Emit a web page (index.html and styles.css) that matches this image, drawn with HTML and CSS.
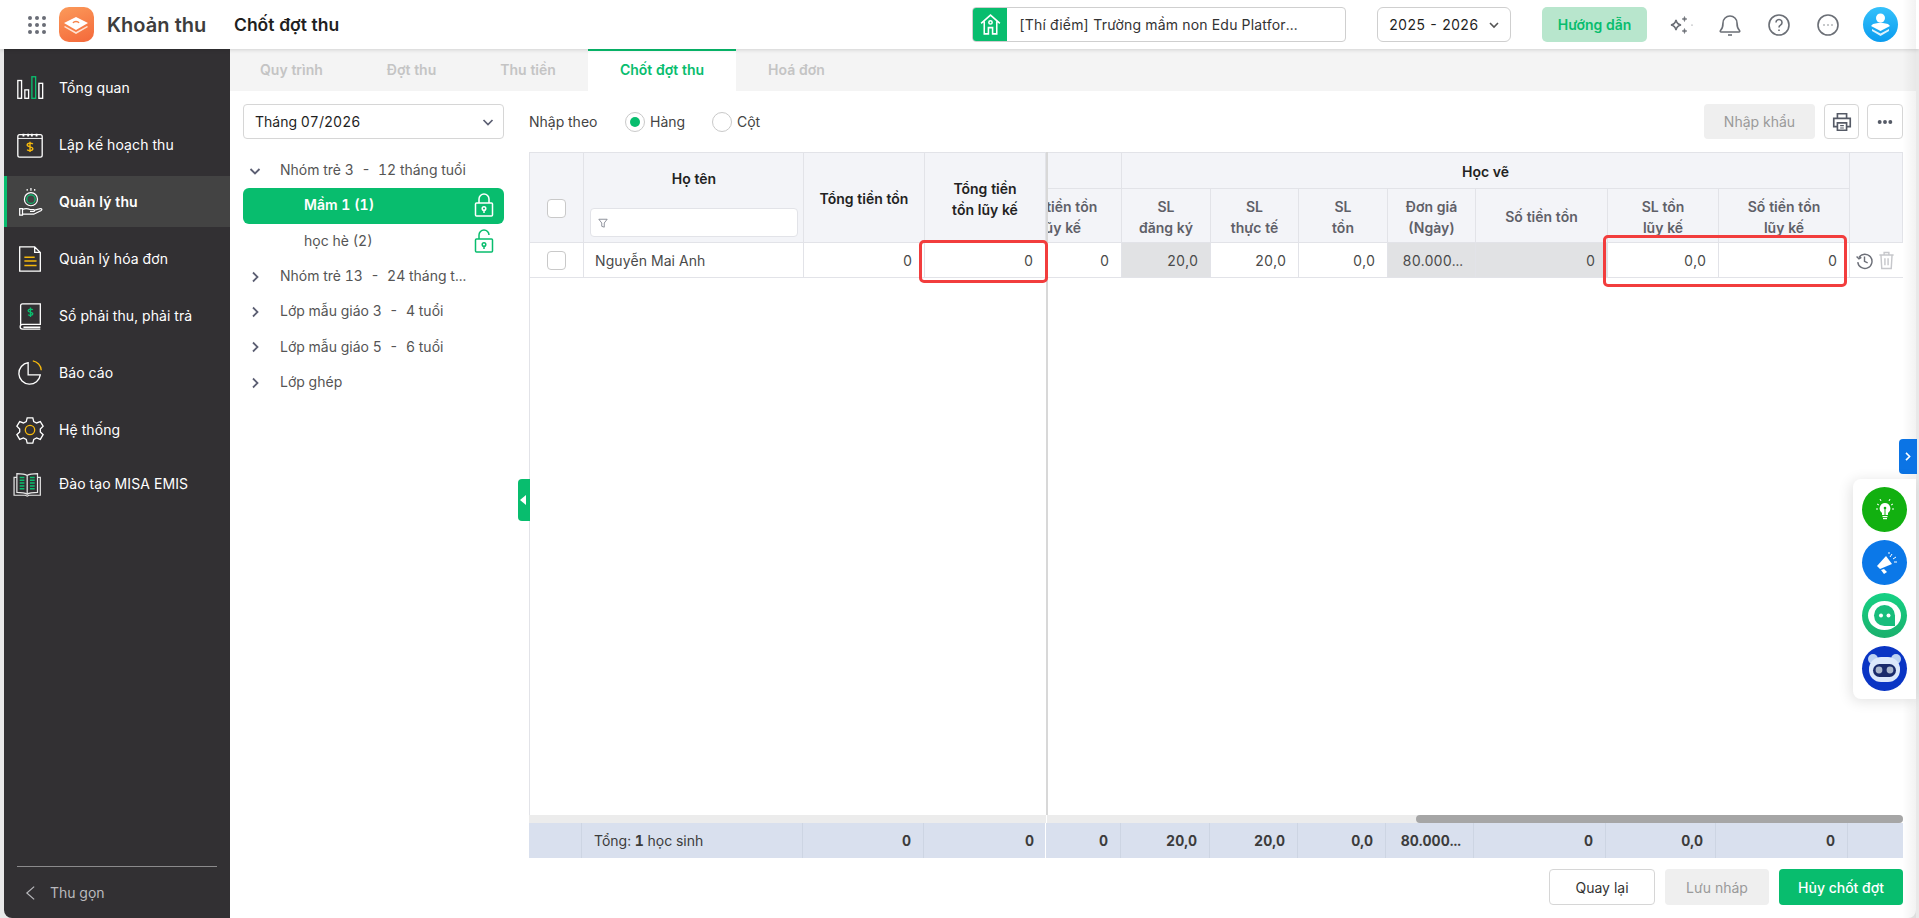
FILE: index.html
```html
<!DOCTYPE html>
<html lang="vi">
<head>
    <meta charset="UTF-8">
    <title>Khoản thu - Chốt đợt thu</title>
    <link rel="stylesheet" href="styles.css">
</head>
<body>
    <header class="topbar">
        <div class="app-dots">
            <i></i><i></i><i></i><i></i><i></i><i></i><i></i><i></i><i></i>
        </div>
        <div class="app-logo">
            <svg viewBox="0 0 34 34" width="34" height="34">
                <path d="M17 10l12 6-12 7-12-7z" fill="#fff"/>
                <path d="M6 19l11 6 11-6 1 1-12 7-12-7z" fill="#ffe3d2"/>
                <path d="M14 16c1-2 5-2 6 0" fill="none" stroke="#f7844a" stroke-width="1.4"/>
            </svg>
        </div>
        <div class="app-name">Khoản thu</div>
        <div class="page-title">Chốt đợt thu</div>
        <div class="school-box">
            <span class="school-icon">
                <svg viewBox="0 0 24 24" width="25" height="25" fill="none" stroke="#fff" stroke-width="1.5">
                    <path d="M3 11l9-8 9 8M6 9v12h4v-6h4v6h4V9"/>
                    <circle cx="12" cy="10" r="1.6"/>
                </svg>
            </span>
            <span class="school-name">[Thí điểm] Trường mầm non Edu Platfor...</span>
        </div>
        <div class="year-box">
            <span>2025 - 2026</span>
            <svg class="chev" viewBox="0 0 12 12" width="12" height="12"><path d="M2 4l4 4 4-4" fill="none" stroke="#555" stroke-width="1.6"/></svg>
        </div>
        <button class="guide-btn">Hướng dẫn</button>
        <div class="top-icons">
            <svg viewBox="0 0 24 24" width="24" height="24" fill="none" stroke="#6b6f76" stroke-width="1.6">
                <path d="M7 7c.6 3 1.900 4.400 5 5-3.100.6-4.400 2-5 5-.6-3-1.900-4.400-5-5 3.100-.6 4.400-2 5-5z"/>
                <path d="M15.500 3.500c.3 1.500.9 2.200 2.500 2.500-1.600.3-2.200 1-2.500 2.500-.3-1.500-.9-2.200-2.500-2.500 1.600-.3 2.200-1 2.500-2.500zM15.500 15.500c.3 1.500.9 2.200 2.500 2.500-1.600.3-2.200 1-2.500 2.500-.3-1.500-.9-2.200-2.500-2.500 1.600-.3 2.200-1 2.500-2.500z" fill="#6b6f76" stroke-width=".6"/>
                <circle cx="23" cy="12" r=".6" fill="#6b6f76" stroke="none"/>
            </svg>
            <svg viewBox="0 0 24 24" width="24" height="24" fill="none" stroke="#6b6f76" stroke-width="1.6">
                <path d="M5 10a7 7 0 0 1 14 0c0 4 1 6 2.500 7.500.6.7.2 1.500-.6 1.500H3.100c-.8 0-1.200-.8-.6-1.500C4 16 5 14 5 10z"/>
                <path d="M10 22h4"/>
            </svg>
            <svg viewBox="0 0 24 24" width="24" height="24" fill="none" stroke="#6b6f76" stroke-width="1.6">
                <circle cx="12" cy="12" r="10"/>
                <path d="M9 9.500a3 3 0 1 1 4.500 2.600c-1 .6-1.500 1.200-1.500 2.400M12 16.500v1.500"/>
            </svg>
            <svg viewBox="0 0 24 24" width="24" height="24" fill="none" stroke="#6b6f76" stroke-width="1.6">
                <circle cx="12" cy="12" r="10"/>
                <path d="M7.500 12h1M11.500 12h1M15.500 12h1"/>
            </svg>
        </div>
        <div class="avatar">
            <svg viewBox="0 0 35 35" width="35" height="35">
                <circle cx="17.500" cy="11" r="4.500" fill="#fff"/>
                <path d="M10 17l7.500-1.500L25 17l2 2-9.500 5L8 19z" fill="#fff"/>
                <path d="M9 22l8.500 4.500L26 22v2l-8.500 5L9 24z" fill="#fff" opacity=".85"/>
            </svg>
        </div>
    </header>

    <div class="layout">
        <aside class="sidebar">
            <nav class="menu">
                <a class="menu-item">
                    <svg class="menu-icon" viewBox="0 0 32 32" fill="none" stroke="#fff" stroke-width="1.4">
                        <rect x="3" y="8" width="4" height="19"/>
                        <rect x="10.500" y="18" width="4" height="9"/>
                        <rect x="18" y="4" width="4" height="23" stroke="#0abf6f"/>
                        <rect x="25.500" y="11" width="4" height="16"/>
                    </svg>
                    Tổng quan
                </a>
                <a class="menu-item">
                    <svg class="menu-icon" viewBox="0 0 32 32" fill="none" stroke="#fff" stroke-width="1.4">
                        <rect x="3" y="5" width="26" height="24" rx="2"/>
                        <path d="M3 9h26" stroke-width="1"/>
                        <path d="M9 4v3M14 4v3M18 4v3M23 4v3" stroke-width="2"/>
                        <path d="M19 15c-1-1.500-6-1.500-6 1s6 1.500 6 4-5 2.500-6 1M16 12.500v11" stroke="#f5b80c" stroke-width="1.500"/>
                    </svg>
                    Lập kế hoạch thu
                </a>
                <a class="menu-item active">
                    <svg class="menu-icon" viewBox="0 0 32 32" fill="none" stroke="#fff" stroke-width="1.3">
                        <circle cx="17" cy="13" r="7"/>
                        <circle cx="17" cy="13" r="4.500" stroke="#0abf6f"/>
                        <path d="M17 1v3M13 2v2M21 2v2"/>
                        <path d="M5 23h3v7H5zM8 24c4-2 6-1 8 0h4c1 0 1 2 0 2h-4M20 25l7-2c2 0 2 1 1 2l-8 4H8"/>
                    </svg>
                    Quản lý thu
                </a>
                <a class="menu-item">
                    <svg class="menu-icon" viewBox="0 0 32 32" fill="none" stroke="#fff" stroke-width="1.4">
                        <path d="M5 3h16l6 6v20H5zM21 3v6h6"/>
                        <path d="M10 14h11M10 18h13M10 23h13" stroke="#f5b80c" stroke-width="1.600"/>
                    </svg>
                    Quản lý hóa đơn
                </a>
                <a class="menu-item">
                    <svg class="menu-icon" viewBox="0 0 32 32" fill="none" stroke="#fff" stroke-width="1.4">
                        <path d="M6 25V5a2 2 0 0 1 2-2h19v22H8a2.500 2.500 0 0 0 0 5h19M9 28h18"/>
                        <path d="M19 9.500c-1-1.200-5-1.200-5 .8s5 1.200 5 3.400-4 2-5 .8M16.500 7v10" stroke="#0abf6f" stroke-width="1.500"/>
                    </svg>
                    Sổ phải thu, phải trả
                </a>
                <a class="menu-item">
                    <svg class="menu-icon" viewBox="0 0 32 32" fill="none" stroke="#fff" stroke-width="1.4">
                        <path d="M14 5a11.500 11.500 0 1 0 13 13H14z"/>
                        <path d="M19 3a11 11 0 0 1 9 10" stroke="#f5b80c"/>
                    </svg>
                    Báo cáo
                </a>
                <a class="menu-item">
                    <svg class="menu-icon" viewBox="0 0 32 32" fill="none" stroke="#fff" stroke-width="1.4">
                        <path d="M13 3h6l1 4 3 1.500 4-1.500 3 5-3 3v3l3 3-3 5-4-1.500-3 1.500-1 4h-6l-1-4-3-1.500-4 1.500-3-5 3-3v-3l-3-3 3-5 4 1.500 3-1.500z"/>
                        <circle cx="16" cy="16" r="5" stroke="#f5b80c"/>
                    </svg>
                    Hệ thống
                </a>
                <a class="menu-item last">
                    <svg class="menu-icon" viewBox="0 0 32 32" fill="none" stroke="#e6e6e6" stroke-width="1.3">
                        <g transform="translate(-3 0)">
                            <path d="M16 7c-3-2-7-2-11-2v20c4 0 8 0 11 2 3-2 7-2 11-2V5c-4 0-8 0-11 2zM16 7v20M5 9H2v19h12l2 1 2-1h12V9h-3"/>
                            <path d="M8 9h5M8 12h5M8 15h5M8 18h5M8 21h5M19 9h5M19 12h5M19 15h5M19 18h5M19 21h5" stroke="#0abf6f" stroke-width="1.600"/>
                        </g>
                    </svg>
                    Đào tạo MISA EMIS
                </a>
            </nav>
            <div class="collapse-row">
                <svg viewBox="0 0 12 16" width="11" height="16"><path d="M10 1L2 8l8 7" fill="none" stroke="#b9b9bd" stroke-width="1.300"/></svg>
                <span>Thu gọn</span>
            </div>
        </aside>

        <main class="main">
            <div class="tabs">
                <a class="tab">Quy trình</a>
                <a class="tab">Đợt thu</a>
                <a class="tab">Thu tiền</a>
                <a class="tab active">Chốt đợt thu</a>
                <a class="tab">Hoá đơn</a>
            </div>

            <div class="content">
                <section class="tree-panel">
                    <div class="month-select">
                        <span>Tháng 07/2026</span>
                        <svg viewBox="0 0 12 12" width="12" height="12"><path d="M1.500 4l4.500 4.500L10.500 4" fill="none" stroke="#5c5f73" stroke-width="1.700"/></svg>
                    </div>
                    <ul class="tree">
                        <li class="tree-row">
                            <svg class="tree-chev" viewBox="0 0 12 12"><path d="M1.500 4l4.500 4.500L10.500 4" fill="none" stroke="#5c5f73" stroke-width="1.800"/></svg>
                            Nhóm trẻ 3&nbsp; - &nbsp;12 tháng tuổi
                        </li>
                        <li class="tree-row child selected">
                            Mầm 1 (1)
                            <svg class="lock" viewBox="0 0 20 24" fill="none" stroke="#fff" stroke-width="1.500">
                                <rect x="1.500" y="10" width="17" height="13" rx="1"/>
                                <path d="M5 10V6a5 5 0 0 1 10 0v4"/>
                                <circle cx="10" cy="15.500" r="1.800"/>
                                <path d="M10 17v3"/>
                            </svg>
                        </li>
                        <li class="tree-row child">
                            học hè (2)
                            <svg class="lock" viewBox="0 0 20 24" fill="none" stroke="#08bd6e" stroke-width="1.500">
                                <rect x="1.500" y="10" width="17" height="13" rx="1"/>
                                <path d="M5 10V6a5 5 0 0 1 10 0"/>
                                <circle cx="10" cy="15.500" r="1.800"/>
                                <path d="M10 17v3"/>
                            </svg>
                        </li>
                        <li class="tree-row">
                            <svg class="tree-chev" viewBox="0 0 12 12"><path d="M4 1.500L8.500 6 4 10.500" fill="none" stroke="#5c5f73" stroke-width="1.800"/></svg>
                            Nhóm trẻ 13&nbsp; - &nbsp;24 tháng t...
                        </li>
                        <li class="tree-row">
                            <svg class="tree-chev" viewBox="0 0 12 12"><path d="M4 1.500L8.500 6 4 10.500" fill="none" stroke="#5c5f73" stroke-width="1.800"/></svg>
                            Lớp mẫu giáo 3&nbsp; - &nbsp;4 tuổi
                        </li>
                        <li class="tree-row">
                            <svg class="tree-chev" viewBox="0 0 12 12"><path d="M4 1.500L8.500 6 4 10.500" fill="none" stroke="#5c5f73" stroke-width="1.800"/></svg>
                            Lớp mẫu giáo 5&nbsp; - &nbsp;6 tuổi
                        </li>
                        <li class="tree-row">
                            <svg class="tree-chev" viewBox="0 0 12 12"><path d="M4 1.500L8.500 6 4 10.500" fill="none" stroke="#5c5f73" stroke-width="1.800"/></svg>
                            Lớp ghép
                        </li>
                    </ul>
                </section>

                <section class="table-panel">
                    <div class="toolbar">
                        <span class="input-label">Nhập theo</span>
                        <label class="radio checked"><i></i>Hàng</label>
                        <label class="radio"><i></i>Cột</label>
                        <div class="toolbar-right">
                            <button class="btn-disabled import-btn">Nhập khẩu</button>
                            <button class="square-btn">
                                <svg viewBox="0 0 24 24" width="22" height="22" fill="none" stroke="#555a66" stroke-width="1.800">
                                    <path d="M7 8V3h10v5M7 17H3V8h18v9h-4"/>
                                    <path d="M7 13h10v8H7z"/>
                                    <path d="M10 16h4M10 18.500h4" stroke-width="1.200"/>
                                </svg>
                            </button>
                            <button class="square-btn wide">
                                <svg viewBox="0 0 18 6" width="16" height="6" fill="#555a66"><circle cx="3" cy="3" r="2.200"/><circle cx="9" cy="3" r="2.200"/><circle cx="15" cy="3" r="2.200"/></svg>
                            </button>
                        </div>
                    </div>

                    <div class="data-table">
                        <div class="panes">
                            <div class="pane-frozen">
                                <div class="frozen-grid">
                                    <div class="th check-cell"><span class="checkbox"></span></div>
                                    <div class="th name-head">
                                        <span>Họ tên</span>
                                        <div class="filter-box">
                                            <svg viewBox="0 0 12 12" width="10" height="10"><path d="M1 1.500h10L7.500 6v5l-3-1V6z" fill="none" stroke="#7b7e8a"/></svg>
                                        </div>
                                    </div>
                                    <div class="th strong">Tổng tiền tồn</div>
                                    <div class="th strong">Tổng tiền<br>tồn lũy kế</div>

                                    <div class="td check-cell"><span class="checkbox"></span></div>
                                    <div class="td left">Nguyễn Mai Anh</div>
                                    <div class="td">0</div>
                                    <div class="td">0</div>
                                </div>
                            </div>
                            <div class="pane-scroll">
                                <div class="scroll-grid">
                                    <div class="th group blank"></div>
                                    <div class="th group">Học vẽ</div>
                                    <div class="th tail"></div>

                                    <div class="th sub">Số tiền tồn<br>lũy kế</div>
                                    <div class="th sub">SL<br>đăng ký</div>
                                    <div class="th sub">SL<br>thực tế</div>
                                    <div class="th sub">SL<br>tồn</div>
                                    <div class="th sub">Đơn giá<br>(Ngày)</div>
                                    <div class="th sub">Số tiền tồn</div>
                                    <div class="th sub">SL tồn<br>lũy kế</div>
                                    <div class="th sub">Số tiền tồn<br>lũy kế</div>

                                    <div class="td">0</div>
                                    <div class="td locked">20,0</div>
                                    <div class="td">20,0</div>
                                    <div class="td">0,0</div>
                                    <div class="td locked">80.000...</div>
                                    <div class="td locked">0</div>
                                    <div class="td">0,0</div>
                                    <div class="td">0</div>
                                    <div class="td actions">
                                        <svg viewBox="0 0 24 24" width="19" height="19" fill="none" stroke="#6c6f78" stroke-width="1.800">
                                            <path d="M5 8a9 9 0 1 1-1.500 6M2 7l3 3 3-2M12 7v6l4 2"/>
                                        </svg>
                                        <svg viewBox="0 0 24 24" width="19" height="19" fill="none" stroke="#c6c7cb" stroke-width="1.800">
                                            <path d="M3 5h18M9 5V2h6v3M5 5l1 17h12l1-17M10 9v9M14 9v9"/>
                                        </svg>
                                    </div>
                                </div>
                            </div>
                        </div>
                        <div class="scrollbar-row">
                            <div class="scroll-track left-track"></div>
                            <div class="scroll-track right-track"><span class="thumb"></span></div>
                        </div>
                        <div class="summary">
                            <div class="sum-frozen">
                                <div class="tf"></div>
                                <div class="tf left"><span>Tổng: <b>1</b> học sinh</span></div>
                                <div class="tf"><b>0</b></div>
                                <div class="tf"><b>0</b></div>
                            </div>
                            <div class="sum-scroll">
                                <div class="tf"><b>0</b></div>
                                <div class="tf"><b>20,0</b></div>
                                <div class="tf"><b>20,0</b></div>
                                <div class="tf"><b>0,0</b></div>
                                <div class="tf"><b>80.000...</b></div>
                                <div class="tf"><b>0</b></div>
                                <div class="tf"><b>0,0</b></div>
                                <div class="tf"><b>0</b></div>
                                <div class="tf"></div>
                            </div>
                        </div>
                        <div class="mark mark-one"></div>
                        <div class="mark mark-two"></div>
                    </div>

                    <div class="page-actions">
                        <button class="btn-outline">Quay lại</button>
                        <button class="btn-disabled">Lưu nháp</button>
                        <button class="btn-primary">Hủy chốt đợt</button>
                    </div>
                </section>
                <div class="tree-toggle"></div>
            </div>
        </main>
    </div>

    <div class="edge-shade"></div>
    <div class="side-tab">
        <svg viewBox="0 0 10 12" width="8" height="11"><path d="M2.500 1.500L7 6l-4.500 4.500" fill="none" stroke="#fff" stroke-width="2"/></svg>
    </div>
    <div class="float-panel">
        <span class="float-btn idea">
            <svg viewBox="0 0 30 30" width="30" height="30" fill="#fff">
                <path d="M15 8a5.500 5.500 0 0 0-3 10v2h6v-2a5.500 5.500 0 0 0-3-10z"/>
                <rect x="12.500" y="21" width="5" height="1.200"/><rect x="13" y="23" width="4" height="1.200"/>
                <circle cx="15" cy="13" r="1.300" fill="#12b010"/>
                <path d="M15 14v6" stroke="#12b010" fill="none"/>
                <path d="M7 9l2 1M23 9l-2 1M6 14h2M22 14h2M10 4l1 2M20 4l-1 2" stroke="#fff" fill="none"/>
            </svg>
        </span>
        <span class="float-btn megaphone">
            <svg viewBox="0 0 30 30" width="30" height="30" fill="#fff">
                <path d="M7 18l9-10 6 8-12 5z"/>
                <path d="M11 22l3-1 3 3-3 2z"/>
                <path d="M20 9l2-3M23 11l3-2M24 14h3M19 6l0-2" stroke="#fff" fill="none"/>
            </svg>
        </span>
        <span class="float-btn chat">
            <svg viewBox="0 0 45 45" width="45" height="45">
                <ellipse cx="22.500" cy="22.500" rx="16.500" ry="14.500" fill="#fff"/>
                <path d="M22.500 12a10.500 10.500 0 1 0 0 21H33v-10.500A10.500 10.500 0 0 0 22.500 12z" fill="#18bd7c"/>
                <circle cx="19" cy="22.500" r="2" fill="#fff"/><circle cx="26.500" cy="22.500" r="2" fill="#fff"/>
            </svg>
        </span>
        <span class="float-btn robot">
            <svg viewBox="0 0 45 45" width="45" height="45">
                <circle cx="11" cy="13" r="5" fill="#bcd2f2"/><circle cx="34" cy="13" r="5" fill="#bcd2f2"/>
                <rect x="7" y="11" width="31" height="25" rx="12" fill="#dce8fb"/>
                <rect x="11" y="18" width="23" height="13" rx="6.500" fill="#1a2a6b"/>
                <circle cx="17" cy="24" r="3.400" fill="#aab6cc"/><circle cx="28" cy="24" r="3.400" fill="#aab6cc"/>
            </svg>
        </span>
    </div>
</body>
</html>
```

FILE: styles.css
```css
* {
    box-sizing: border-box;
}

html, body {
    height: 100%;
}

body {
    margin: 0;
    height: 918px;
    overflow: hidden;
    display: flex;
    flex-direction: column;
    position: relative;
    background-color: #e9e9e9;
    font-family: Inter, "Noto Sans", sans-serif;
    font-size: 14px;
    font-feature-settings: "tnum";
    color: #3c3c3c;
}

button {
    font-family: inherit;
    font-size: 14px;
    cursor: pointer;
}

ul {
    list-style: none;
    margin: 0;
    padding: 0;
}

/* thanh tren cung */
.topbar {
    height: 49px;
    flex: none;
    display: flex;
    align-items: center;
    background-color: #fff;
    box-shadow: 0 1px 4px rgba(0, 0, 0, 0.14);
    position: relative;
    z-index: 2;
}

.app-dots {
    display: grid;
    grid-template-columns: repeat(3, 4px);
    gap: 3px;
    margin-left: 28px;
}

.app-dots i {
    width: 4px;
    height: 4px;
    border-radius: 50%;
    background-color: #6a6d76;
}

.app-logo {
    width: 35px;
    height: 35px;
    margin-left: 13px;
    border-radius: 10px;
    background: linear-gradient(160deg, #fb9a5a, #f4683a);
}

.app-name {
    margin-left: 13px;
    width: 127px;
    font-size: 20px;
    font-weight: 600;
    color: #3d3d3d;
    white-space: nowrap;
}

.page-title {
    font-size: 17.500px;
    font-weight: 600;
    color: #1f1f1f;
    width: 738px;
}

.school-box {
    width: 374px;
    height: 35px;
    display: flex;
    align-items: center;
    border: 1px solid #cfcfcf;
    border-radius: 4px;
    overflow: hidden;
}

.school-icon {
    width: 34px;
    height: 35px;
    flex: none;
    display: flex;
    align-items: center;
    justify-content: center;
    background-color: #08bd6e;
}

.school-name {
    margin-left: 12px;
    color: #333;
    letter-spacing: 0.2px;
}

.year-box {
    width: 134px;
    height: 35px;
    margin-left: 31px;
    padding: 0 10px 0 11px;
    display: flex;
    align-items: center;
    justify-content: space-between;
    border: 1px solid #cfcfcf;
    border-radius: 6px;
    color: #1f1f1f;
}

.guide-btn {
    width: 105px;
    height: 35px;
    margin-left: 31px;
    border: none;
    border-radius: 5px;
    background-color: #b8e6cd;
    color: #08bd6e;
    font-weight: 600;
}

.top-icons {
    display: flex;
    gap: 25px;
    margin-left: 22px;
}

.top-icons svg {
    overflow: visible;
}

.avatar {
    width: 35px;
    height: 35px;
    margin-left: 23px;
    border-radius: 50%;
    background: linear-gradient(180deg, #35c1fb, #0a9cef);
}

.layout {
    flex: 1;
    display: flex;
    min-height: 0;
    padding: 0 3px 0 4px;
    background-color: #e9e9e9;
}

/* menu ben trai */
.sidebar {
    width: 226px;
    flex: none;
    display: flex;
    flex-direction: column;
    background-color: #323033;
    border-bottom-left-radius: 8px;
    color: #fff;
}

.menu {
    flex: 1;
    padding-top: 13px;
    display: flex;
    flex-direction: column;
    gap: 6px;
}

.menu-item {
    height: 51px;
    display: flex;
    align-items: center;
    gap: 14px;
    padding-left: 11px;
    font-size: 14px;
    letter-spacing: 0.1px;
    color: #fff;
}

.menu-item.last {
    margin-top: -3px;
}

.menu-item.active {
    background-color: #434343;
    border-left: 3px solid #08bd6e;
    padding-left: 8px;
    font-weight: 600;
}

.menu-icon {
    width: 30px;
    height: 30px;
    flex: none;
    overflow: visible;
}

.collapse-row {
    height: 52px;
    margin: 0 13px;
    padding-left: 8px;
    display: flex;
    align-items: center;
    gap: 14px;
    border-top: 1px solid #8b8a8c;
    color: #b9b9bd;
}

.main {
    flex: 1;
    min-width: 0;
    display: flex;
    flex-direction: column;
    background-color: #fff;
    border-bottom-right-radius: 8px;
}

.tabs {
    height: 42px;
    flex: none;
    display: flex;
    background-color: #f4f4f4;
}

.tab {
    padding: 0 32px;
    line-height: 42px;
    font-weight: 600;
    font-size: 14px;
    color: #c4c4c4;
}

.tab:first-child {
    padding-left: 30px;
}

.tab.active {
    background-color: #fff;
    color: #08bd6e;
    border-top: 2px solid #08bd6e;
    line-height: 38px;
}

.content {
    flex: 1;
    min-height: 0;
    display: flex;
    gap: 25px;
    padding: 13px 13px 13px 13px;
    position: relative;
}

/* cay nhom lop */
.tree-panel {
    width: 261px;
    flex: none;
}

.month-select {
    height: 35px;
    padding: 0 9px 0 11px;
    display: flex;
    align-items: center;
    justify-content: space-between;
    border: 1px solid #d6d6d6;
    border-radius: 4px;
    color: #1f1f1f;
}

.tree {
    margin-top: 14px;
}

.tree-row {
    height: 35.300px;
    display: flex;
    align-items: center;
    padding: 0 0 2px 37px;
    position: relative;
    color: #555;
}

.tree-chev {
    width: 12px;
    height: 12px;
    position: absolute;
    left: 6px;
    top: 12px;
}

.tree-row.child {
    padding-left: 61px;
}

.tree-row.selected {
    background-color: #08bd6e;
    border-radius: 6px;
    color: #fff;
    font-weight: 600;
}

.lock {
    position: absolute;
    right: 10px;
    top: 5px;
    width: 20px;
    height: 24px;
}

.tree-toggle {
    position: absolute;
    left: 288px;
    top: 388px;
    width: 12px;
    height: 42px;
    background-color: #08bd6e;
    border-radius: 4px 0 0 4px;
}

.tree-toggle::after {
    content: "";
    position: absolute;
    left: 2px;
    top: 16px;
    border: 5px solid transparent;
    border-left-width: 0;
    border-right: 6px solid #fff;
}

.table-panel {
    flex: 1;
    min-width: 0;
    display: flex;
    flex-direction: column;
}

.toolbar {
    height: 35px;
    flex: none;
    display: flex;
    align-items: center;
    margin-bottom: 13px;
}

.input-label {
    width: 96px;
    color: #444;
}

.radio {
    display: flex;
    align-items: center;
    gap: 5px;
    width: 87px;
    color: #444;
}

.radio i {
    width: 20px;
    height: 20px;
    border: 1px solid #c9c9c9;
    border-radius: 50%;
    position: relative;
}

.radio.checked i::after {
    content: "";
    position: absolute;
    left: 4px;
    top: 4px;
    width: 10px;
    height: 10px;
    border-radius: 50%;
    background-color: #08bd6e;
}

.toolbar-right {
    margin-left: auto;
    display: flex;
    gap: 8px;
}

.import-btn {
    width: 111px;
    margin-right: 1px;
}

.square-btn {
    width: 35px;
    height: 35px;
    padding: 0;
    display: flex;
    align-items: center;
    justify-content: center;
    background-color: #fff;
    border: 1px solid #d6d6d6;
    border-radius: 4px;
}

.square-btn.wide {
    width: 36px;
}

.btn-disabled {
    height: 35px;
    border: none;
    border-radius: 4px;
    background-color: #efefef;
    color: #9a9a9a;
}

/* bang du lieu */
.data-table {
    flex: 1;
    min-height: 0;
    display: flex;
    flex-direction: column;
    position: relative;
}

.panes {
    flex: 1;
    min-height: 0;
    display: flex;
    border-left: 1px solid #e2e3e8;
}

.pane-frozen {
    width: 518px;
    flex: none;
    border-right: 2px solid #d8d8d8;
    overflow: hidden;
}

.frozen-grid {
    display: grid;
    grid-template-columns: 54px 220px 121px 121px;
    grid-template-rows: 91px 35px;
}

.pane-scroll {
    flex: 1;
    min-width: 0;
    overflow: hidden;
}

.scroll-grid {
    margin-left: -47px;
    display: grid;
    grid-template-columns: 121px 89px 88px 89px 88px 132px 111px 131px 53px;
    grid-template-rows: 37px 54px 35px;
}

.th {
    display: flex;
    align-items: center;
    justify-content: center;
    text-align: center;
    padding-top: 2px;
    line-height: 21px;
    font-size: 14px;
    background-color: #f3f4f8;
    border-top: 1px solid #e2e3e8;
    border-right: 1px solid #e2e3e8;
    border-bottom: 1px solid #e2e3e8;
    color: #222;
    font-weight: 600;
}

.th.sub {
    border-top: none;
    color: #5f6068;
}

.th.group {
    grid-column: 2 / span 7;
}

.th.group.blank {
    grid-column: 1;
}

.th.tail {
    grid-column: 9;
    grid-row: 1 / span 2;
}

.check-cell {
    justify-content: center;
}

.checkbox {
    width: 19px;
    height: 19px;
    background-color: #fff;
    border: 1px solid #c9c9c9;
    border-radius: 4px;
}

.th.check-cell {
    align-items: flex-start;
    padding-top: 46px;
}

.name-head {
    flex-direction: column;
    justify-content: flex-start;
    padding: 15px 5px 0 6px;
}

.filter-box {
    width: 100%;
    height: 29px;
    margin-top: 19px;
    padding: 5px 7px;
    display: flex;
    align-items: center;
    background-color: #fff;
    border: 1px solid #e2e3e8;
    border-radius: 4px;
}

.td {
    height: 35px;
    display: flex;
    align-items: center;
    justify-content: flex-end;
    padding-right: 12px;
    border-right: 1px solid #e2e3e8;
    border-bottom: 1px solid #e2e3e8;
    color: #4a4a4a;
}

.td.left {
    justify-content: flex-start;
    padding-left: 11px;
    letter-spacing: 0.1px;
}

.td.locked {
    background-color: #e1e2e4;
}

.td.check-cell {
    justify-content: center;
    padding-right: 0;
}

.td.actions {
    justify-content: flex-start;
    gap: 3px;
    padding: 0 0 0 5px;
    border-right: none;
}

.scrollbar-row {
    height: 8px;
    flex: none;
    display: flex;
    gap: 1px;
}

.scroll-track {
    background-color: #ececec;
}

.left-track {
    width: 517px;
    flex: none;
}

.right-track {
    flex: 1;
    position: relative;
    border-radius: 0 4px 4px 0;
}

.thumb {
    position: absolute;
    right: 0;
    top: 0;
    width: 487px;
    height: 8px;
    border-radius: 4px;
    background-color: #a6a6a6;
}

.summary {
    height: 35px;
    flex: none;
    display: flex;
    background-color: #d9e0ee;
}

.sum-frozen {
    width: 517px;
    flex: none;
    display: grid;
    grid-template-columns: 53px 221px 121px 122px;
    border-right: 1px solid #fff;
}

.sum-scroll {
    flex: 1;
    display: grid;
    grid-template-columns: 75px 89px 88px 88px 88px 132px 110px 132px 1fr;
}

.tf {
    display: flex;
    align-items: center;
    justify-content: flex-end;
    padding-right: 12px;
    border-right: 1px solid #cdd5e3;
    color: #3c3c3c;
}

.tf.left {
    justify-content: flex-start;
    padding-left: 12px;
}

.tf:last-child {
    border-right: none;
}

.tf b {
    font-weight: 700;
}

.mark {
    position: absolute;
    border: 3.500px solid #f23d3d;
    border-radius: 5px;
}

.mark-one {
    left: 390px;
    top: 88px;
    width: 129px;
    height: 43px;
}

.mark-two {
    left: 1074px;
    top: 83px;
    width: 244px;
    height: 52px;
}

.page-actions {
    flex: none;
    margin-top: 11px;
    display: flex;
    justify-content: flex-end;
    gap: 10px;
}

.page-actions button {
    height: 36px;
}

.page-actions .btn-outline {
    width: 106px;
    background-color: #fff;
    border: 1px solid #d6d6d6;
    border-radius: 4px;
    color: #333;
}

.page-actions .btn-disabled {
    width: 104px;
}

.page-actions .btn-primary {
    width: 124px;
    background-color: #08bd6e;
    border: none;
    border-radius: 4px;
    color: #fff;
    font-weight: 500;
}

/* bong mo o mep phai */
.edge-shade {
    position: absolute;
    top: 0;
    bottom: 0;
    right: 3px;
    width: 14px;
    background: linear-gradient(90deg, rgba(0, 0, 0, 0), rgba(0, 0, 0, 0.05));
    pointer-events: none;
    z-index: 2;
}

/* cac nut noi ben phai */
.side-tab {
    position: absolute;
    right: 2px;
    top: 439px;
    width: 18px;
    height: 35px;
    display: flex;
    align-items: center;
    justify-content: center;
    background-color: #0b74e5;
    border-radius: 4px 0 0 4px;
    z-index: 3;
}

.float-panel {
    position: absolute;
    right: 3px;
    top: 479px;
    width: 63px;
    height: 220px;
    padding: 8px 9px;
    display: flex;
    flex-direction: column;
    justify-content: space-between;
    background-color: #fff;
    border-radius: 8px 0 0 8px;
    box-shadow: -2px 2px 14px rgba(0, 0, 0, 0.12);
    z-index: 3;
}

.float-btn {
    width: 45px;
    height: 45px;
    border-radius: 50%;
    display: flex;
    align-items: center;
    justify-content: center;
    overflow: hidden;
}

.float-btn.idea {
    background-color: #12b010;
}

.float-btn.megaphone {
    background-color: #0b78e8;
}

.float-btn.chat {
    background: linear-gradient(180deg, #16d184, #1bb06d);
}

.float-btn.robot {
    background-color: #0a35c4;
}
```
